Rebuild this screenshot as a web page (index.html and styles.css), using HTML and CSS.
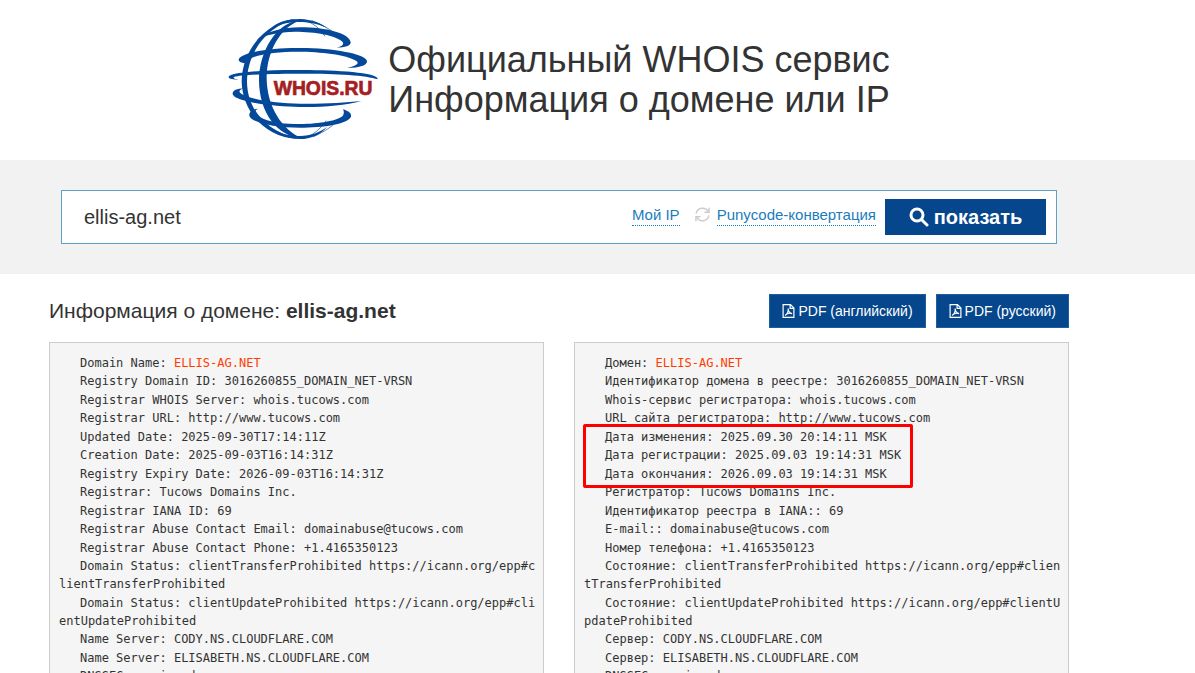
FILE: index.html
```html
<!DOCTYPE html>
<html lang="ru">
<head>
    <meta charset="UTF-8">
    <meta name="viewport" content="width=device-width, initial-scale=1.0">
    <title>WHOIS.RU - ellis-ag.net</title>
    <link rel="stylesheet" href="styles.css">
</head>
<body>
    <header class="header">
        <svg class="logo" viewBox="24 24 450 366" role="img" aria-label="WHOIS.RU">
            <g fill="#04489a">
                <!-- meridians -->
                <path d="M232 27 C150 28 66 112 65 215 C67 300 132 384 235 387 C140 364 82 300 81 215 C82 120 150 42 232 27Z"/>
                <path d="M245 29 C168 35 117 125 117 212 C118 305 168 378 250 387 C185 360 141 290 140 205 C140 125 180 50 245 29Z"/>
                <!-- parallels -->
                <path d="M109 92 C135 64 190 52 240 52 C320 52 388 70 392 97 C393 107 375 113 350 113 C366 109 373 103 368 96 C350 76 285 65 225 65 C175 66 135 74 109 92Z"/>
                <path d="M150 59 C170 35 205 27 240 27 C275 28 305 41 322 54 C290 40 262 36 238 36 C205 36 175 43 150 59Z"/>
                <path d="M80 160 C50 159 48 144 75 134 C115 119 185 113 240 114 C340 114 438 132 441 153 C441 167 420 173 382 174 C410 167 420 160 408 152 C380 134 300 125 235 125 C160 125 80 136 80 160Z"/>
                <path d="M55 209 C22 210 16 198 42 192 C95 182 180 179 250 180 C350 181 478 187 473 208 C440 196 350 191 250 191 C170 191 65 193 42 201 C38 205 46 207 55 209Z"/>
                <path d="M72 235 C52 241 55 250 75 257 C115 272 180 280 240 281 C310 282 375 278 424 273 C375 286 310 292 240 291 C160 290 45 276 38 253 C37 241 50 236 72 235Z"/>
                <path d="M114 296 C99 303 105 316 130 326 C160 338 195 342 240 342 C300 342 355 331 368 318 C373 311 372 304 369 298 C385 303 395 309 393 320 C384 342 310 353 240 353 C165 353 94 338 88 317 C87 305 97 298 114 296Z"/>
                <path d="M150 350 C180 372 210 378 240 378 C272 377 300 367 322 350 C302 374 272 387 240 387 C205 386 170 373 150 350Z"/>
            </g>
            <g fill="none" stroke="#04489a" stroke-width="2">
                <path d="M250 30 C280 38 300 56 315 79"/>
                <path d="M275 32 C315 47 345 66 360 88"/>
                <path d="M250 385 C280 376 302 356 318 332"/>
                <path d="M280 380 C312 366 340 348 352 330"/>
            </g>
            <text class="logo-text" x="161" y="256">WHOIS.RU</text>
        </svg>
        <h1 class="title">Официальный WHOIS сервис<br>Информация о домене или IP</h1>
    </header>

    <div class="search">
        <form class="search-form">
            <input class="search-input" type="text" value="ellis-ag.net" aria-label="Домен или IP">
            <a class="search-link" href="#">Мой IP</a>
            <svg class="icon-refresh" viewBox="0 0 16 16" aria-hidden="true">
                <path d="M1.2 7 A6.9 6.9 0 0 1 14.2 5.2 M14.8 9 A6.9 6.9 0 0 1 1.8 10.8"/>
                <path d="M15 .8 V5.6 H10.2 M1 15.2 V10.4 H5.8"/>
            </svg>
            <a class="search-link" href="#">Punycode-конвертация</a>
            <button class="search-button" type="submit">
                <svg class="icon-search" viewBox="0 0 20 20" aria-hidden="true">
                    <circle cx="8" cy="8" r="6"/>
                    <path d="M13 13 L18 18"/>
                </svg>
                показать
            </button>
        </form>
    </div>

    <main class="content">
        <div class="content-head">
            <h2 class="domain-title">Информация о домене: <b>ellis-ag.net</b></h2>
            <button class="pdf-button" type="button">
                <svg class="icon-pdf" viewBox="0 0 12 14" aria-hidden="true">
                    <path d="M.6 .6 H8 L11.4 4 V13.4 H.6 Z M7.6 .8 V4.4 H11.2"/>
                    <path d="M2.6 11.4 C4.6 10 6 7 5.6 4.6 C5.8 7.4 7 9 9.6 9.6 C7 8.8 4.6 9.4 2.6 11.4"/>
                </svg>
                PDF (английский)
            </button>
            <button class="pdf-button" type="button">
                <svg class="icon-pdf" viewBox="0 0 12 14" aria-hidden="true">
                    <path d="M.6 .6 H8 L11.4 4 V13.4 H.6 Z M7.6 .8 V4.4 H11.2"/>
                    <path d="M2.6 11.4 C4.6 10 6 7 5.6 4.6 C5.8 7.4 7 9 9.6 9.6 C7 8.8 4.6 9.4 2.6 11.4"/>
                </svg>
                PDF (русский)
            </button>
        </div>

        <div class="columns">
            <div class="whois">
                <div class="row">Domain Name: <span class="domain">ELLIS-AG.NET</span></div>
                <div class="row">Registry Domain ID: 3016260855_DOMAIN_NET-VRSN</div>
                <div class="row">Registrar WHOIS Server: whois.tucows.com</div>
                <div class="row">Registrar URL: http://www.tucows.com</div>
                <div class="row">Updated Date: 2025-09-30T17:14:11Z</div>
                <div class="row">Creation Date: 2025-09-03T16:14:31Z</div>
                <div class="row">Registry Expiry Date: 2026-09-03T16:14:31Z</div>
                <div class="row">Registrar: Tucows Domains Inc.</div>
                <div class="row">Registrar IANA ID: 69</div>
                <div class="row">Registrar Abuse Contact Email: domainabuse@tucows.com</div>
                <div class="row">Registrar Abuse Contact Phone: +1.4165350123</div>
                <div class="row">Domain Status: clientTransferProhibited https://icann.org/epp#clientTransferProhibited</div>
                <div class="row">Domain Status: clientUpdateProhibited https://icann.org/epp#clientUpdateProhibited</div>
                <div class="row">Name Server: CODY.NS.CLOUDFLARE.COM</div>
                <div class="row">Name Server: ELISABETH.NS.CLOUDFLARE.COM</div>
                <div class="row">DNSSEC: unsigned</div>
            </div>
            <div class="whois">
                <div class="row">Домен: <span class="domain">ELLIS-AG.NET</span></div>
                <div class="row">Идентификатор домена в реестре: 3016260855_DOMAIN_NET-VRSN</div>
                <div class="row">Whois-сервис регистратора: whois.tucows.com</div>
                <div class="row">URL сайта регистратора: http://www.tucows.com</div>
                <div class="row marked">Дата изменения: 2025.09.30 20:14:11 MSK</div>
                <div class="row">Дата регистрации: 2025.09.03 19:14:31 MSK</div>
                <div class="row">Дата окончания: 2026.09.03 19:14:31 MSK</div>
                <div class="row">Регистратор: Tucows Domains Inc.</div>
                <div class="row">Идентификатор реестра в IANA:: 69</div>
                <div class="row">E-mail:: domainabuse@tucows.com</div>
                <div class="row">Номер телефона: +1.4165350123</div>
                <div class="row">Состояние: clientTransferProhibited https://icann.org/epp#clientTransferProhibited</div>
                <div class="row">Состояние: clientUpdateProhibited https://icann.org/epp#clientUpdateProhibited</div>
                <div class="row">Сервер: CODY.NS.CLOUDFLARE.COM</div>
                <div class="row">Сервер: ELISABETH.NS.CLOUDFLARE.COM</div>
                <div class="row">DNSSEC: unsigned</div>
            </div>
        </div>
    </main>
</body>
</html>
```
FILE: styles.css
```css
* {
    box-sizing: border-box;
}

body {
    margin: 0;
    background-color: #fff;
    color: #333;
    font-family: "Liberation Sans", Arial, sans-serif;
    font-size: 14px;
    line-height: 20px;
}

.header {
    display: flex;
    align-items: center;
    justify-content: center;
    gap: 10px;
    max-width: 1118px;
    padding: 18px 0 20px;
}

.logo {
    flex: none;
    width: 150px;
    height: 122px;
}

.logo-text {
    font-size: 58px;
    font-weight: bold;
    fill: #a41e22;
    stroke: #a41e22;
    stroke-width: 2;
}

.title {
    margin: 0;
    padding-top: 2px;
    font-size: 36px;
    font-weight: normal;
    line-height: 40px;
}

/* search bar */
.search {
    padding: 30px 61px;
    background-color: #f2f2f2;
}

.search-form {
    display: flex;
    align-items: center;
    max-width: 996px;
    height: 54px;
    padding: 0 10px 0 22px;
    border: 1px solid #5fa2c8;
    background-color: #fff;
}

.search-input {
    flex: 1;
    min-width: 0;
    padding: 0;
    border: none;
    outline: none;
    background: none;
    color: #333;
    font-family: inherit;
    font-size: 20px;
}

.search-link {
    margin-bottom: 4px;
    border-bottom: 1px dotted #1a7dbb;
    color: #1a7dbb;
    font-size: 15px;
    text-decoration: none;
}

.icon-refresh {
    width: 15px;
    height: 15px;
    margin: 0 7px 6px 15px;
    fill: none;
    stroke: #ccc;
    stroke-width: 1.5;
}

.search-button {
    display: flex;
    align-items: center;
    justify-content: center;
    gap: 5px;
    width: 161px;
    height: 36px;
    margin-left: 9px;
    padding: 0;
    border: none;
    background-color: #05468c;
    color: #fff;
    font-family: inherit;
    font-size: 20px;
    font-weight: bold;
    cursor: pointer;
}

.icon-search {
    width: 20px;
    height: 20px;
    fill: none;
    stroke: #fff;
    stroke-width: 3;
    stroke-linecap: round;
}

/* whois results */
.content {
    max-width: 1118px;
    padding: 20px 49px;
}

.content-head {
    display: flex;
    align-items: center;
    gap: 10px;
    margin-bottom: 14px;
}

.domain-title {
    flex: 1;
    margin: 0;
    font-size: 21px;
    font-weight: normal;
    line-height: 24px;
}

.pdf-button {
    display: flex;
    align-items: center;
    gap: 3px;
    height: 34px;
    padding: 0 12px;
    border: 1px solid #1a5f9e;
    background-color: #05468c;
    color: #fff;
    font-family: inherit;
    font-size: 14px;
    cursor: pointer;
}

.icon-pdf {
    width: 13px;
    height: 14px;
    fill: none;
    stroke: #fff;
    stroke-width: 1.2;
}

.columns {
    display: flex;
    align-items: flex-start;
    gap: 30px;
}

.whois {
    flex: 1;
    padding: 10px 7px 10px 9px;
    border: 1px solid #ccc;
    background-color: #f5f5f5;
    font-family: "DejaVu Sans Mono", monospace;
    font-size: 12px;
    line-height: 18px;
    word-break: break-all;
}

.row {
    text-indent: 21px;
}

.row:nth-child(odd) {
    padding-top: 1px;
}

.domain {
    color: #ff3c00;
}

/* frame around the three date rows */
.marked {
    position: relative;
}

.marked::before {
    content: "";
    position: absolute;
    top: -3px;
    left: -1px;
    box-sizing: border-box;
    width: 330px;
    height: 64px;
    border: 3px solid #f00;
    border-radius: 2px;
}
```
